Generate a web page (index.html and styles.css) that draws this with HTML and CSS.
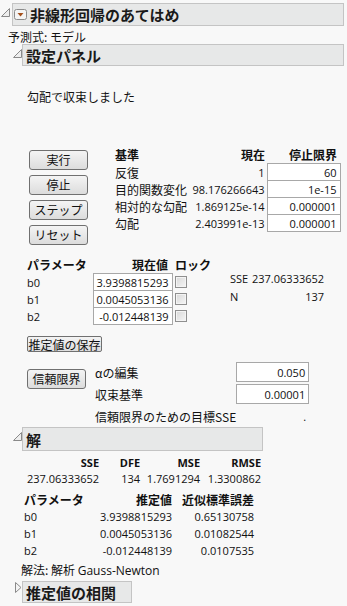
FILE: index.html
```html
<!DOCTYPE html>
<html lang="ja">
<head>
    <meta charset="UTF-8">
    <meta name="viewport" content="width=device-width, initial-scale=1.0">
    <title>非線形回帰のあてはめ</title>
    <link rel="stylesheet" href="styles.css">
</head>
<body>
<div class="report">
    <!-- タイトル -->
    <div class="outline-head top">
        <span class="disc"><svg width="9" height="9" viewBox="0 0 9 9"><path d="M0.5 8.5 H8.5 V0.5 Z" fill="#eeeeee" stroke="#8a8a8a"/></svg></span>
        <div class="head-box title-box">
            <span class="menu-btn"><svg width="13" height="11" viewBox="0 0 13 11"><rect x="0.5" y="0.5" width="12" height="10" rx="2" fill="#f4f4f4" stroke="#8c8c8c"/><path d="M3.5 4 L9.5 4 L6.5 7.5 Z" fill="#a4501c"/></svg></span>
            非線形回帰のあてはめ
        </div>
    </div>
    <p class="formula">予測式: モデル</p>

    <!-- 設定パネル -->
    <div class="outline-head sub">
        <span class="disc"><svg width="9" height="9" viewBox="0 0 9 9"><path d="M0.5 8.5 H8.5 V0.5 Z" fill="#eeeeee" stroke="#8a8a8a"/></svg></span>
        <div class="head-box panel-box">設定パネル</div>
    </div>
    <div class="panel">
        <p class="status">勾配で収束しました</p>

        <div class="control-row">
            <div class="btn-col">
                <button class="btn">実行</button>
                <button class="btn">停止</button>
                <button class="btn">ステップ</button>
                <button class="btn">リセット</button>
            </div>
            <table class="criteria">
                <tr><th class="c1">基準</th><th class="c2">現在</th><th class="c3">停止限界</th></tr>
                <tr><td class="c1">反復</td><td class="c2 n">1</td><td class="c3 box n">60</td></tr>
                <tr><td class="c1">目的関数変化</td><td class="c2 n">98.176266643</td><td class="c3 box n">1e-15</td></tr>
                <tr><td class="c1">相対的な勾配</td><td class="c2 n">1.869125e-14</td><td class="c3 box n">0.000001</td></tr>
                <tr><td class="c1">勾配</td><td class="c2 n">2.403991e-13</td><td class="c3 box n">0.000001</td></tr>
            </table>
        </div>

        <div class="param-row">
            <table class="params">
                <tr><th class="c1">パラメータ</th><th class="c2">現在値</th><th class="c3">ロック</th></tr>
                <tr><td class="c1 n">b0</td><td class="c2 box n">3.9398815293</td><td class="c3"><span class="check"></span></td></tr>
                <tr><td class="c1 n">b1</td><td class="c2 box n">0.0045053136</td><td class="c3"><span class="check"></span></td></tr>
                <tr><td class="c1 n">b2</td><td class="c2 box n">-0.012448139</td><td class="c3"><span class="check"></span></td></tr>
            </table>
            <table class="stats">
                <tr><td class="c1 n">SSE</td><td class="c2 n">237.06333652</td></tr>
                <tr><td class="c1 n">N</td><td class="c2 n">137</td></tr>
            </table>
        </div>

        <button class="btn save-btn">推定値の保存</button>

        <div class="conf-row">
            <button class="btn conf-btn">信頼限界</button>
            <table class="conf">
                <tr><td class="c1">αの編集</td><td class="c2 box n">0.050</td></tr>
                <tr><td class="c1">収束基準</td><td class="c2 box n">0.00001</td></tr>
                <tr><td class="c1">信頼限界のための目標SSE</td><td class="c2 n">.</td></tr>
            </table>
        </div>
    </div>

    <!-- 解 -->
    <div class="outline-head sub">
        <span class="disc"><svg width="9" height="9" viewBox="0 0 9 9"><path d="M0.5 8.5 H8.5 V0.5 Z" fill="#eeeeee" stroke="#8a8a8a"/></svg></span>
        <div class="head-box sol-box">解</div>
    </div>
    <div class="solution">
        <table class="fit">
            <tr><th class="c1 n">SSE</th><th class="c2 n">DFE</th><th class="c3 n">MSE</th><th class="c4 n">RMSE</th></tr>
            <tr><td class="c1 n">237.06333652</td><td class="c2 n">134</td><td class="c3 n">1.7691294</td><td class="c4 n">1.3300862</td></tr>
        </table>
        <table class="est">
            <tr><th class="c1">パラメータ</th><th class="c2">推定値</th><th class="c3">近似標準誤差</th></tr>
            <tr><td class="c1 n">b0</td><td class="c2 n">3.9398815293</td><td class="c3 n">0.65130758</td></tr>
            <tr><td class="c1 n">b1</td><td class="c2 n">0.0045053136</td><td class="c3 n">0.01082544</td></tr>
            <tr><td class="c1 n">b2</td><td class="c2 n">-0.012448139</td><td class="c3 n">0.0107535</td></tr>
        </table>
        <p class="method">解法: 解析 <span class="n">Gauss-Newton</span></p>
    </div>

    <!-- 推定値の相関 -->
    <div class="outline-head sub closed">
        <span class="disc"><svg width="7" height="11" viewBox="0 0 7 11"><path d="M0.5 0.5 L6 5.5 L0.5 10.5 Z" fill="#f4f4f4" stroke="#8a8a8a"/></svg></span>
        <div class="head-box corr-box">推定値の相関</div>
    </div>
</div>
</body>
</html>
```

FILE: styles.css
```css
* {
    box-sizing: border-box;
}
body {
    margin: 0;
    background-color: #f8f8f8;
    font-family: "Noto Sans CJK JP", sans-serif;
    font-size: 12px;
    color: #111;
}
p {
    margin: 0;
}
table {
    border-collapse: collapse;
}
th, td {
    padding: 0;
    white-space: nowrap;
}
th {
    font-weight: bold;
}
.n {
    font-family: "Open Sans", "Noto Sans CJK JP", sans-serif;
    font-size: 11px; /* 数値は欧文フォント */
}

/* アウトラインの見出し */
.report {
    padding-top: 3px;
}
.outline-head {
    display: flex;
    align-items: flex-start;
}
.outline-head .disc {
    display: block;
    width: 12px;
    padding-top: 5px;
    padding-left: 1px;
}
.outline-head .disc svg {
    display: block;
}
.outline-head.sub {
    padding-left: 12px;
}
.outline-head.sub .disc {
    width: 10px;
}
.outline-head.closed .disc {
    padding-left: 3px;
    padding-top: 1px;
}
.head-box {
    display: flex;
    align-items: center;
    height: 22px;
    border: 1px solid #c4c4c4;
    background-color: #e7e8e8;
    padding-left: 3px;
    font-size: 15px;
    font-weight: bold;
    color: #1a1a1a;
}
.title-box {
    width: 332px;
    height: 23px;
    padding-left: 1px;
}
.menu-btn {
    display: block;
    margin-right: 3px;
}
.menu-btn svg {
    display: block;
}
.panel-box {
    width: 322px;
}
.sol-box {
    width: 241px;
    height: 24px;
}
.corr-box {
    width: 110px;
}
.formula {
    margin-top: 4px;
    padding-left: 8px;
    line-height: 14px;
}

/* 設定パネル */
.panel {
    padding-left: 27px;
}
.status {
    margin-top: 24px;
    line-height: 14px;
}
.control-row {
    display: flex;
    align-items: flex-start;
    margin-top: 42px;
    padding-left: 2px;
}
.btn-col {
    display: flex;
    flex-direction: column;
    gap: 5px;
    padding-top: 4px;
    width: 59px;
    margin-right: 27px;
}
.btn {
    display: block;
    width: 59px;
    height: 20px;
    padding: 0;
    border: 1px solid #707070;
    border-radius: 3px;
    background: linear-gradient(#f4f4f4, #dcdcdc);
    font-family: inherit;
    font-size: 12px;
    color: #111;
    line-height: 16px;
}
.box {
    border: 1px solid #a8a8a8;
    background-color: #fff;
}

.criteria th {
    height: 16px;
    text-align: right;
}
.criteria td {
    height: 17px;
    text-align: right;
}
.criteria .c1 {
    width: 75px;
    text-align: left;
}
.criteria .c2 {
    width: 77px;
    padding-right: 2px;
}
.criteria .c3 {
    width: 73px;
    padding-right: 3px;
}

.param-row {
    display: flex;
    align-items: flex-start;
    margin-top: 11px;
}
.params th {
    height: 16px;
}
.params td {
    height: 17px;
}
.params .c1 {
    width: 66px;
    text-align: left;
}
.params .c2 {
    width: 79px;
    text-align: right;
    padding-right: 3px;
}
.params th.c2 {
    padding-right: 4px;
}
.params .c3 {
    width: 40px;
    padding-left: 2px;
    text-align: left;
}
.params th.c3 {
    padding-left: 3px;
}
.check {
    display: block;
    width: 12px;
    height: 12px;
    border: 1px solid #8f8f8f;
    background: linear-gradient(135deg, #d8d8d8, #f6f6f6);
    box-shadow: inset 0 0 0 1px #f4f4f4;
}
.stats {
    margin-left: 18px;
    margin-top: 13px;
}
.stats td {
    height: 18px;
}
.stats .c1 {
    width: 22px;
}
.stats .c2 {
    width: 68px;
    text-align: right;
}

.save-btn {
    width: 75px;
    height: 16px;
    margin-top: 11px;
    line-height: 13px;
    border-radius: 2px;
}
.conf-row {
    display: flex;
    align-items: flex-start;
    margin-top: 10px;
}
.conf-btn {
    margin-top: 7px;
    margin-right: 9px;
}
.conf {
    border-collapse: separate;
    border-spacing: 0 2px;
    margin-top: -2px;
    margin-bottom: -1px;
}
.conf td {
    height: 20px;
}
.conf .c1 {
    width: 139px;
}
.conf .c2 {
    width: 73px;
    text-align: right;
    padding-right: 3px;
}

/* 解 */
.solution {
    padding-left: 24px;
}
.fit {
    margin-top: 3px;
    margin-left: 3px;
}
.fit th {
    height: 16px;
    text-align: right;
}
.fit td {
    height: 17px;
    text-align: right;
}
.fit .c1 { width: 70px; }
.fit .c2 { width: 41px; }
.fit .c3 { width: 60px; }
.fit .c4 { width: 61px; }
.est {
    margin-top: 4px;
}
.est th {
    height: 16px;
    text-align: right;
}
.est td {
    height: 17px;
    text-align: right;
}
.est .c1 {
    width: 76px;
    text-align: left;
}
.est .c2 { width: 64px; }
.est .c3 { width: 82px; }
.method {
    margin-top: 4px;
    margin-left: -3px;
    line-height: 14px;
}
.method .n {
    font-size: 12px;
}
.outline-head.closed {
    margin-top: 3px;
}
```
